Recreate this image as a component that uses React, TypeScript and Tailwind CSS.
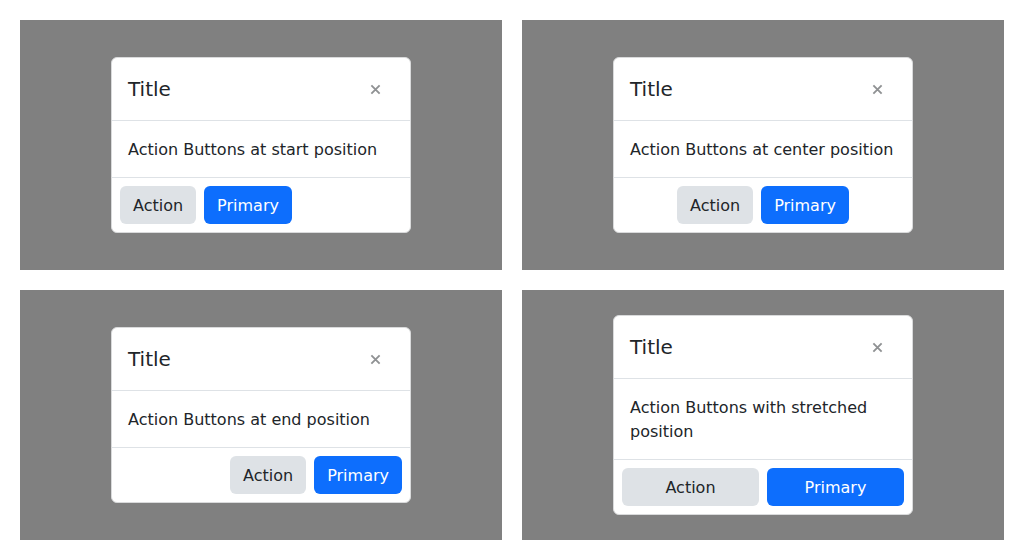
const FONT = "font-['DejaVu_Sans',sans-serif]";

type Align = "start" | "center" | "end" | "stretch";

const footerAlign: Record<Align, string> = {
  start: "justify-start",
  center: "justify-center",
  end: "justify-end",
  stretch: "justify-stretch",
};

function CloseIcon() {
  return (
    <svg width="11" height="11" viewBox="0 0 16 16" className="text-[#212529] opacity-50">
      <path d="M2 2L14 14M14 2L2 14" stroke="currentColor" strokeWidth="2.6" strokeLinecap="butt" />
    </svg>
  );
}

function Modal({ text, align }: { text: string; align: Align }) {
  const grow = align === "stretch" ? "flex-1" : "";
  return (
    <div className="w-[300px] rounded-[6px] border border-[#d9dadb] bg-white text-[#212529]">
      <div className="flex items-center justify-between border-b border-[#dee2e6] p-4">
        <h5 className="text-[20px] leading-[30px]">Title</h5>
        <button type="button" className="mr-[9px] flex h-5 w-5 items-center justify-center">
          <CloseIcon />
        </button>
      </div>
      <div className="px-4 pt-[17px] pb-[15px] text-base leading-6">{text}</div>
      <div className={`flex gap-2 border-t border-[#dee2e6] p-2 ${footerAlign[align]}`}>
        <button
          type="button"
          className={`${grow} rounded-[6px] bg-[#dee2e6] px-[13px] pt-[8px] pb-[6px] text-base leading-6 text-[#212529]`}
        >
          Action
        </button>
        <button
          type="button"
          className={`${grow} rounded-[6px] bg-[#0d6efd] px-[13px] pt-[8px] pb-[6px] text-base leading-6 text-white`}
        >
          Primary
        </button>
      </div>
    </div>
  );
}

const demos: { text: string; align: Align }[] = [
  { text: "Action Buttons at start position", align: "start" },
  { text: "Action Buttons at center position", align: "center" },
  { text: "Action Buttons at end position", align: "end" },
  { text: "Action Buttons with stretched position", align: "stretch" },
];

export default function App() {
  return (
    <div className={`${FONT} grid h-[560px] w-[1024px] grid-cols-2 grid-rows-2 gap-5 bg-white p-5`}>
      {demos.map((d) => (
        <div key={d.align} className="flex items-center justify-center bg-[#808080]">
          <Modal text={d.text} align={d.align} />
        </div>
      ))}
    </div>
  );
}
